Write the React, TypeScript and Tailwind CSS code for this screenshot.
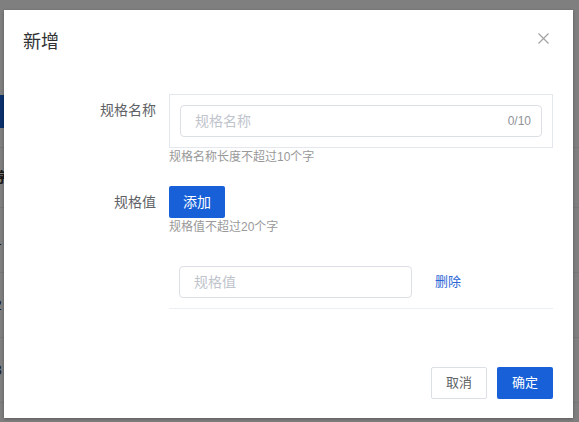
import React from "react";

const blue = "bg-[#1760d7]";

function BackgroundPage() {
  const rows = ["1", "2", "3"];
  return (
    <div className="flex flex-col">
      <div className={`mt-[95px] h-[33px] w-[80px] ${blue}`} />
      <div className="mt-[19px] ml-[-6px] flex flex-col border-t border-[#ebeef5]">
        <div className="flex h-[60px] items-center border-b border-[#ebeef5] pl-0 text-[14px] font-bold text-[#333]">
          序号
        </div>
        {rows.map((r) => (
          <div
            key={r}
            className="flex h-[65px] items-center border-b border-[#ebeef5] text-[14px] text-[#333]"
          >
            {r}
          </div>
        ))}
      </div>
    </div>
  );
}

function CloseIcon() {
  return (
    <svg width="11" height="11" viewBox="0 0 11 11" fill="none">
      <path d="M0.5 0.5L10.5 10.5M10.5 0.5L0.5 10.5" stroke="#a3a3a3" strokeWidth="1.2" />
    </svg>
  );
}

export default function App() {
  return (
    <div className="relative h-[422px] w-[579px] overflow-hidden bg-white font-['Liberation_Sans','Noto_Sans_CJK_SC',sans-serif]">
      <BackgroundPage />

      {/* overlay + dialog */}
      <div className="absolute inset-0 bg-black/50 pl-[4px] pt-[10px]">
        <div className="flex h-[408px] w-[569px] flex-col bg-white shadow-[0_1px_3px_rgba(0,0,0,0.3)]">
          <div className="relative pl-[19px] pt-[20px]">
            <h2 className="text-[18px] leading-6 text-[#303133]">新增</h2>
            <button className="absolute right-[24px] top-[23px] flex h-[11px] w-[11px] items-center justify-center">
              <CloseIcon />
            </button>
          </div>

          <div className="mt-[40px] flex flex-col">
            {/* 规格名称 */}
            <div className="flex">
              <label className="h-8 w-[165px] shrink-0 pr-[13px] text-right text-[14px] leading-8 text-[#606266]">
                规格名称
              </label>
              <div className="flex flex-col">
                <div className="w-[384px] border border-[#e4e7ed] p-[10px]">
                  <div className="flex h-8 items-center justify-between rounded-[4px] border border-[#dcdfe6] pl-[14px] pr-[10px]">
                    <span className="text-[14px] text-[#c0c4cc]">规格名称</span>
                    <span className="text-[12px] text-[#909399]">0/10</span>
                  </div>
                </div>
                <p className="text-[12px] leading-[18px] text-[#999]">规格名称长度不超过10个字</p>
              </div>
            </div>

            {/* 规格值 */}
            <div className="mt-[20px] flex">
              <label className="h-8 w-[165px] shrink-0 pr-[13px] text-right text-[14px] leading-8 text-[#606266]">
                规格值
              </label>
              <div className="flex flex-col">
                <button className={`h-8 w-14 rounded-[2px] ${blue} text-[14px] text-white`}>添加</button>
                <p className="text-[12px] leading-[18px] text-[#999]">规格值不超过20个字</p>
              </div>
            </div>

            <div className="mt-[30px] flex pl-[165px]">
              <div className="flex w-[384px] items-center border-b border-[#ebeef5] pb-[10px] pl-[10px]">
                <div className="flex h-8 w-[233px] items-center rounded-[4px] border border-[#dcdfe6] pl-[14px]">
                  <span className="text-[14px] text-[#c0c4cc]">规格值</span>
                </div>
                <span className="ml-[23px] text-[13px] text-[#2a66d6]">删除</span>
              </div>
            </div>
          </div>

          <div className="mt-auto flex justify-end gap-[10px] pb-[19px] pr-[20px]">
            <button className="h-8 w-14 rounded-[2px] border border-[#dcdfe6] bg-white text-[13px] text-[#606266]">
              取消
            </button>
            <button className={`h-8 w-14 rounded-[2px] ${blue} text-[13px] text-white`}>确定</button>
          </div>
        </div>
      </div>
    </div>
  );
}
